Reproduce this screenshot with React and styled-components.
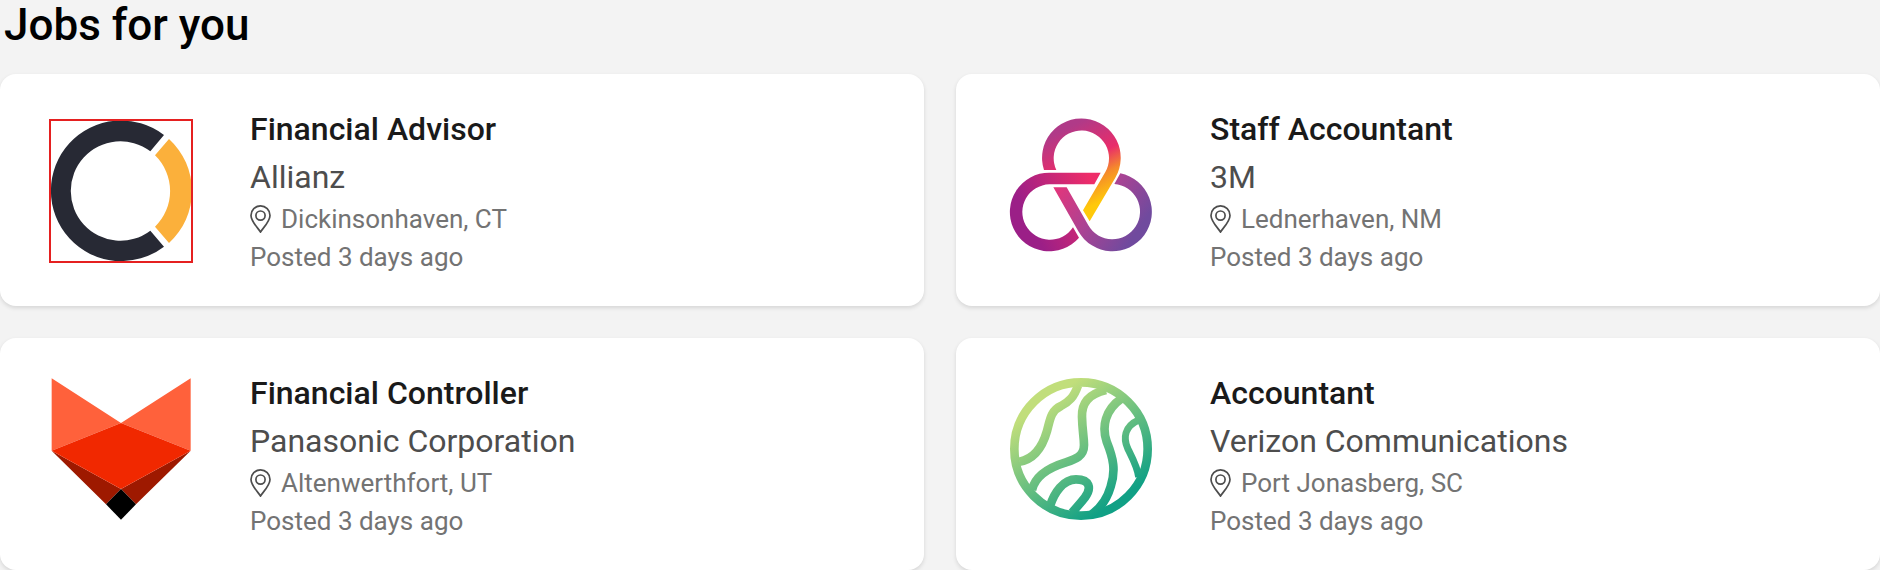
import React from "react";
import styled, { createGlobalStyle } from "styled-components";

const GlobalStyle = createGlobalStyle`
  *, *::before, *::after { box-sizing: border-box; }
  body {
    margin: 0;
    background: #f3f3f3;
    font-family: Roboto, "Liberation Sans", sans-serif;
  }
`;

const Page = styled.main`
  width: 100%;
`;

const Heading = styled.h1`
  margin: 0 0 24px;
  padding-left: 4px;
  font-size: 44px;
  line-height: 50px;
  font-weight: 500;
  color: #000;
`;

const JobGrid = styled.ul`
  display: grid;
  grid-template-columns: repeat(2, minmax(0, 1fr));
  gap: 32px;
  margin: 0;
  padding: 0;
  list-style: none;
`;

const JobCard = styled.li`
  display: flex;
  align-items: flex-start;
  gap: 57px;
  padding: 31px 49px;
  background: #fff;
  border-radius: 16px;
  box-shadow: 0 2px 4px rgba(0, 0, 0, 0.12);

  &:nth-child(even) {
    padding-left: 53px;
  }
`;

const Logo = styled.svg`
  flex: none;
  width: 144px;
  height: 144px;
  margin-top: ${(p) => (p.$framed ? "14px" : "8px")};
`;

const Details = styled.div`
  min-width: 0;
`;

const JobTitle = styled.h2`
  margin: 0;
  font-size: 32px;
  line-height: 48px;
  font-weight: 500;
  color: #1a1a1a;
`;

const Company = styled.p`
  margin: 0;
  font-size: 32px;
  line-height: 48px;
  color: #4d4d4d;
`;

const Meta = styled.p`
  display: flex;
  align-items: center;
  gap: 10px;
  margin: 0;
  font-size: 26px;
  line-height: 36px;
  color: #737373;

  & + & {
    margin-top: 2px;
  }
`;

const Pin = styled.svg`
  flex: none;
  width: 21px;
  height: 28px;
  fill: none;
  stroke: #4d4d4d;
  stroke-width: 1.7;
`;

function RingLogo() {
  return (
    <Logo $framed viewBox="57 57 432 432" role="img" aria-label="Allianz logo">
      <path fill="#272934" d="M402 105A211 211 0 1 0 402 440L361 392A149 149 0 1 1 361 154Z" />
      <path fill="#fbb03b" d="M417 117A211 211 0 0 1 417 429L375 380A149 149 0 0 0 375 166Z" />
      <rect x="60" y="60" width="426" height="426" fill="none" stroke="#e52020" strokeWidth="6" />
    </Logo>
  );
}

function KnotLogo() {
  return (
    <Logo viewBox="57 39 432 432" role="img" aria-label="3M logo">
      <defs>
        <linearGradient id="knotLeft" gradientUnits="userSpaceOnUse" x1="110" y1="350" x2="310" y2="250">
          <stop offset="0" stopColor="#9b1f87" />
          <stop offset="1" stopColor="#ee2d69" />
        </linearGradient>
        <linearGradient id="knotTop" gradientUnits="userSpaceOnUse" x1="200" y1="100" x2="318" y2="336">
          <stop offset="0" stopColor="#b03a88" />
          <stop offset="0.42" stopColor="#e92c6a" />
          <stop offset="0.65" stopColor="#f58a2b" />
          <stop offset="0.92" stopColor="#ffc90a" />
        </linearGradient>
        <linearGradient id="knotRight" gradientUnits="userSpaceOnUse" x1="200" y1="250" x2="430" y2="410">
          <stop offset="0" stopColor="#e5357a" />
          <stop offset="0.5" stopColor="#ac4393" />
          <stop offset="1" stopColor="#704a9e" />
        </linearGradient>
      </defs>
      <path fill="url(#knotLeft)" d="M332 218H178A118 118 0 1 0 267 413L249 382A83 83 0 1 1 178 253H313Z" />
      <path fill="url(#knotTop)" d="M162 210A118 118 0 1 1 376 233L299 364L279 331L346 216A83 83 0 1 0 199 210Z" />
      <path fill="url(#knotRight)" d="M190 262H230L295 376A83 83 0 1 0 373 252L391 220A118 118 0 1 1 265 394Z" />
    </Logo>
  );
}

function FoxLogo() {
  return (
    <Logo viewBox="57 51 432 432" role="img" aria-label="Panasonic Corporation logo">
      <path fill="#ff613b" d="M65 55L273 189L65 272ZM482 55L273 189L482 272Z" />
      <path fill="#9e1900" d="M65 272L273 387L228 433ZM482 272L273 387L318 433Z" />
      <path fill="#f12800" d="M65 272L273 189L482 272L273 387Z" />
      <path d="M273 387L318 433L273 479L228 433Z" />
    </Logo>
  );
}

function GlobeLogo() {
  return (
    <Logo viewBox="57 51 432 432" role="img" aria-label="Verizon Communications logo">
      <defs>
        <linearGradient id="globe" gradientUnits="userSpaceOnUse" x1="160" y1="130" x2="370" y2="430">
          <stop offset="0" stopColor="#c1de7b" />
          <stop offset="1" stopColor="#10a085" />
        </linearGradient>
      </defs>
      <g fill="none" stroke="url(#globe)" strokeWidth="26">
        <circle cx="273" cy="267" r="200" />
        <path d="M264 76C252 112 236 126 213 138C182 152 180 180 171 213C157 262 130 298 88 305" />
        <path d="M348 90C295 102 275 130 276 170C277 215 282 230 282 255C282 290 255 298 225 308C180 322 136 345 126 390" />
        <path d="M394 116C345 150 335 200 350 245C370 295 378 330 362 380C352 415 335 442 304 464" />
        <path strokeWidth="21" d="M446 180C402 200 400 235 413 265C428 295 444 325 446 352" />
        <path d="M180 438C193 397 220 358 258 358C300 358 305 385 285 412C275 425 262 440 246 458" />
      </g>
    </Logo>
  );
}

const jobs = [
  { title: "Financial Advisor", company: "Allianz", place: "Dickinsonhaven, CT", Mark: RingLogo },
  { title: "Staff Accountant", company: "3M", place: "Lednerhaven, NM", Mark: KnotLogo },
  { title: "Financial Controller", company: "Panasonic Corporation", place: "Altenwerthfort, UT", Mark: FoxLogo },
  { title: "Accountant", company: "Verizon Communications", place: "Port Jonasberg, SC", Mark: GlobeLogo },
];

export default function App() {
  return (
    <Page>
      <GlobalStyle />
      <Heading>Jobs for you</Heading>
      <JobGrid>
        {jobs.map(({ title, company, place, Mark }) => (
          <JobCard key={title}>
            <Mark />
            <Details>
              <JobTitle>{title}</JobTitle>
              <Company>{company}</Company>
              <Meta>
                <Pin viewBox="0 0 21 28" aria-hidden="true">
                  <path d="M10.5 27C8.6 23.8 1 16.4 1 10.4A9.5 9.5 0 0 1 20 10.4C20 16.4 12.4 23.8 10.5 27Z" />
                  <circle cx="10.5" cy="10.6" r="4.6" />
                </Pin>
                {place}
              </Meta>
              <Meta>Posted 3 days ago</Meta>
            </Details>
          </JobCard>
        ))}
      </JobGrid>
    </Page>
  );
}
